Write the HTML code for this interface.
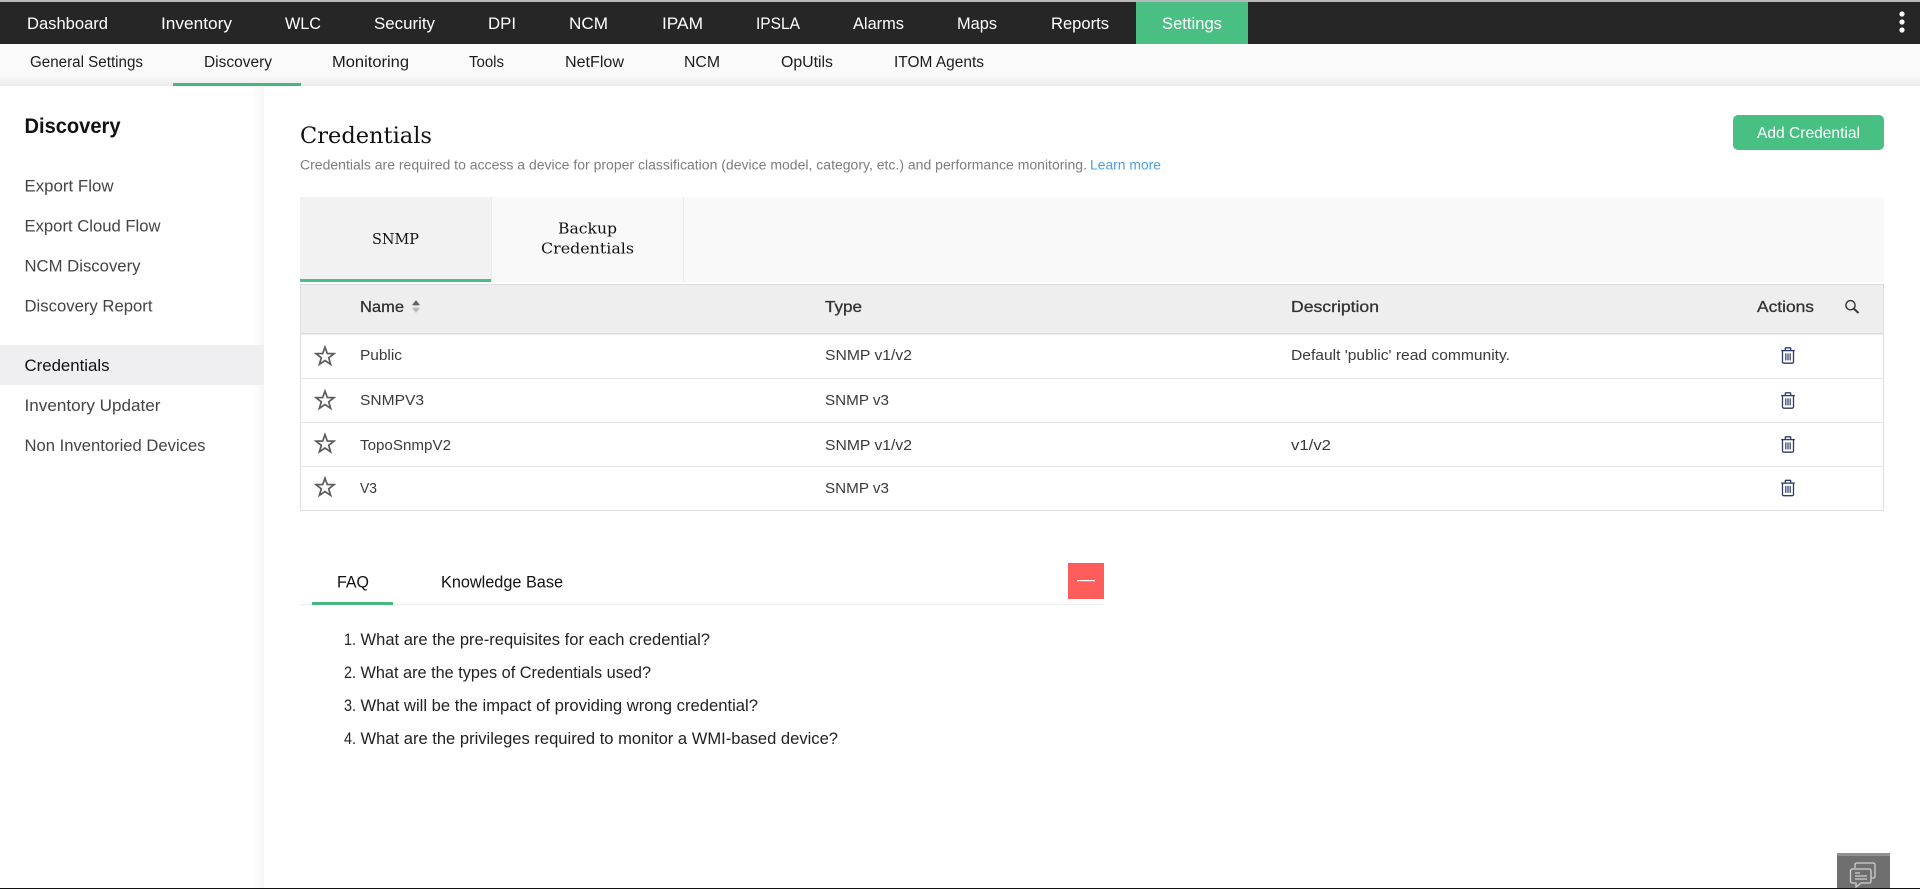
<!DOCTYPE html>
<html lang="en">
<head>
<meta charset="utf-8">
<title>Credentials</title>
<style>
html,body{margin:0;padding:0;background:#fff;width:1920px;height:889px;overflow:hidden}
svg{display:block}
text{font-family:"Liberation Sans",Arial,sans-serif;white-space:pre}
.n{font-size:17px;fill:#fff}
.s{font-size:15.5px;fill:#1c1c1c}
.l{font-size:16.5px;fill:#444}
.h{font-family:"DejaVu Serif","Liberation Serif",serif}
.th{font-size:16px;fill:#333;stroke:#333;stroke-width:.3px}
.td{font-size:15px;fill:#3a3a3a}
.q{font-size:16.5px;fill:#222}
</style>
</head>
<body>
<svg width="1920" height="889" viewBox="0 0 1920 889" xmlns="http://www.w3.org/2000/svg">
<defs>
<linearGradient id="sub" x1="0" y1="0" x2="0" y2="1"><stop offset="0" stop-color="#fafafa"/><stop offset=".75" stop-color="#fafafa"/><stop offset="1" stop-color="#ececec"/></linearGradient>
<linearGradient id="side" x1="0" y1="0" x2="1" y2="0"><stop offset="0" stop-color="#fff"/><stop offset="1" stop-color="#f6f6f6"/></linearGradient>
<g id="star"><path d="M10 1.6 12.3 8 19 8.2 13.7 12.3 15.6 18.8 10 15 4.4 18.8 6.3 12.3 1 8.2 7.7 8Z" fill="none" stroke="#5c5c5c" stroke-width="1.7" stroke-linejoin="miter"/></g>
<g id="trash" fill="none" stroke="#2c3a66" stroke-width="1.3"><path d="M.7 3.6H14.3"/><path d="M4.8 3.4V1.5Q4.8.8 5.5.8H9.5Q10.2.8 10.2 1.5V3.4"/><path d="M2 3.6V14.8Q2 16.2 3.4 16.2H11.6Q13 16.2 13 14.8V3.6"/><path d="M5.3 6.4V13.4M7.5 6.4V13.4M9.7 6.4V13.4" stroke-width="1.2"/></g>
</defs>

<!-- top strip and nav -->
<rect width="1920" height="2" fill="#b9b9b9"/>
<rect y="2" width="1920" height="42" fill="#262626"/>
<rect x="1136" y="2" width="112" height="42" fill="#4abf83"/>
<text class="n" x="27" y="29" textLength="81" lengthAdjust="spacingAndGlyphs">Dashboard</text>
<text class="n" x="161" y="29" textLength="71" lengthAdjust="spacingAndGlyphs">Inventory</text>
<text class="n" x="285" y="29" textLength="36" lengthAdjust="spacingAndGlyphs">WLC</text>
<text class="n" x="374" y="29" textLength="61" lengthAdjust="spacingAndGlyphs">Security</text>
<text class="n" x="488" y="29" textLength="28" lengthAdjust="spacingAndGlyphs">DPI</text>
<text class="n" x="569" y="29" textLength="39" lengthAdjust="spacingAndGlyphs">NCM</text>
<text class="n" x="662" y="29" textLength="41" lengthAdjust="spacingAndGlyphs">IPAM</text>
<text class="n" x="756" y="29" textLength="44" lengthAdjust="spacingAndGlyphs">IPSLA</text>
<text class="n" x="853" y="29" textLength="51" lengthAdjust="spacingAndGlyphs">Alarms</text>
<text class="n" x="957" y="29" textLength="40" lengthAdjust="spacingAndGlyphs">Maps</text>
<text class="n" x="1051" y="29" textLength="58" lengthAdjust="spacingAndGlyphs">Reports</text>
<text class="n" x="1162" y="29" textLength="60" lengthAdjust="spacingAndGlyphs">Settings</text>
<circle cx="1902" cy="14" r="2.6" fill="#fff"/><circle cx="1902" cy="22" r="2.6" fill="#fff"/><circle cx="1902" cy="30" r="2.6" fill="#fff"/>

<!-- sub nav -->
<rect y="44" width="1920" height="42" fill="url(#sub)"/>
<rect x="173" y="83" width="128" height="3" fill="#43b77c"/>
<text class="s" x="30" y="67" textLength="113" lengthAdjust="spacingAndGlyphs">General Settings</text>
<text class="s" x="204" y="67" textLength="68" lengthAdjust="spacingAndGlyphs">Discovery</text>
<text class="s" x="332" y="67" textLength="77" lengthAdjust="spacingAndGlyphs">Monitoring</text>
<text class="s" x="469" y="67" textLength="35" lengthAdjust="spacingAndGlyphs">Tools</text>
<text class="s" x="565" y="67" textLength="59" lengthAdjust="spacingAndGlyphs">NetFlow</text>
<text class="s" x="684" y="67" textLength="36" lengthAdjust="spacingAndGlyphs">NCM</text>
<text class="s" x="781" y="67" textLength="52" lengthAdjust="spacingAndGlyphs">OpUtils</text>
<text class="s" x="894" y="67" textLength="90" lengthAdjust="spacingAndGlyphs">ITOM Agents</text>

<!-- sidebar -->
<rect x="252" y="86" width="12" height="802" fill="url(#side)"/>
<rect x="0" y="345" width="264" height="40" fill="#efeff1"/>
<text x="24.5" y="133" font-size="21" font-weight="bold" fill="#111" textLength="96" lengthAdjust="spacingAndGlyphs">Discovery</text>
<text class="l" x="24.5" y="191.5" textLength="89" lengthAdjust="spacingAndGlyphs">Export Flow</text>
<text class="l" x="24.5" y="231.5" textLength="136" lengthAdjust="spacingAndGlyphs">Export Cloud Flow</text>
<text class="l" x="24.5" y="271.5" textLength="116" lengthAdjust="spacingAndGlyphs">NCM Discovery</text>
<text class="l" x="24.5" y="311.5" textLength="128" lengthAdjust="spacingAndGlyphs">Discovery Report</text>
<text class="l" x="24.5" y="371" textLength="85" lengthAdjust="spacingAndGlyphs" style="fill:#111">Credentials</text>
<text class="l" x="24.5" y="411" textLength="136" lengthAdjust="spacingAndGlyphs">Inventory Updater</text>
<text class="l" x="24.5" y="451" textLength="181" lengthAdjust="spacingAndGlyphs">Non Inventoried Devices</text>

<!-- heading -->
<text class="h" x="300" y="143" font-size="22" fill="#111" textLength="132" lengthAdjust="spacingAndGlyphs">Credentials</text>
<text x="300" y="169.5" font-size="13.5" fill="#7d7d7d" textLength="787" lengthAdjust="spacingAndGlyphs">Credentials are required to access a device for proper classification (device model, category, etc.) and performance monitoring.</text>
<text x="1090" y="169.5" font-size="13.5" fill="#4a9fe3" textLength="71" lengthAdjust="spacingAndGlyphs">Learn more</text>
<rect x="1733" y="115" width="151" height="35" rx="5" fill="#48bf83"/>
<text x="1757" y="138" font-size="16" fill="#fff" textLength="103" lengthAdjust="spacingAndGlyphs">Add Credential</text>

<!-- tabs -->
<rect x="300" y="197" width="1584" height="85" fill="#f9f9f9"/>
<rect x="300" y="197" width="191" height="85" fill="#f2f2f2"/>
<rect x="491" y="197" width="1" height="85" fill="#ececec"/>
<rect x="683" y="197" width="1" height="85" fill="#ececec"/>
<rect x="300" y="279" width="191" height="3" fill="#48bf83"/>
<text class="h" x="372" y="244" font-size="14.5" fill="#111" textLength="47" lengthAdjust="spacingAndGlyphs">SNMP</text>
<text class="h" x="558" y="233.5" font-size="14.5" fill="#111" textLength="59" lengthAdjust="spacingAndGlyphs">Backup</text>
<text class="h" x="541" y="253.5" font-size="14.5" fill="#111" textLength="93" lengthAdjust="spacingAndGlyphs">Credentials</text>

<!-- table -->
<rect x="300.5" y="284.5" width="1583" height="226" fill="#fff" stroke="#dedede"/>
<rect x="301" y="285" width="1582" height="48" fill="#eee"/>
<rect x="301" y="333" width="1582" height="1.5" fill="#dcdcdc"/>
<rect x="301" y="378" width="1582" height="1" fill="#e4e4e4"/>
<rect x="301" y="422" width="1582" height="1" fill="#e4e4e4"/>
<rect x="301" y="466" width="1582" height="1" fill="#e4e4e4"/>
<text class="th" x="360" y="312" textLength="44" lengthAdjust="spacingAndGlyphs">Name</text>
<path d="M413 304.8 416 301 419 304.8Z" fill="#666" stroke="#666" stroke-width="1.2" stroke-linejoin="round"/>
<path d="M413 308.2 416 312 419 308.2Z" fill="#bbb" stroke="#bbb" stroke-width="1.2" stroke-linejoin="round"/>
<text class="th" x="825" y="312" textLength="37" lengthAdjust="spacingAndGlyphs">Type</text>
<text class="th" x="1291" y="312" textLength="88" lengthAdjust="spacingAndGlyphs">Description</text>
<text class="th" x="1757" y="312" textLength="57" lengthAdjust="spacingAndGlyphs">Actions</text>
<g fill="none" stroke="#333" stroke-width="1.4"><circle cx="1850.5" cy="305.2" r="4.6"/><path d="M1854 308.8 1858.5 313" stroke-width="1.9"/></g>

<use href="#star" x="315" y="345.5"/>
<use href="#star" x="315" y="389.5"/>
<use href="#star" x="315" y="433"/>
<use href="#star" x="315" y="476.5"/>

<text class="td" x="360" y="360" textLength="42" lengthAdjust="spacingAndGlyphs">Public</text>
<text class="td" x="825" y="360" textLength="87" lengthAdjust="spacingAndGlyphs">SNMP v1/v2</text>
<text class="td" x="1291" y="360" textLength="219" lengthAdjust="spacingAndGlyphs">Default 'public' read community.</text>
<text class="td" x="360" y="405" textLength="64" lengthAdjust="spacingAndGlyphs">SNMPV3</text>
<text class="td" x="825" y="405" textLength="64" lengthAdjust="spacingAndGlyphs">SNMP v3</text>
<text class="td" x="360" y="450" textLength="91" lengthAdjust="spacingAndGlyphs">TopoSnmpV2</text>
<text class="td" x="825" y="450" textLength="87" lengthAdjust="spacingAndGlyphs">SNMP v1/v2</text>
<text class="td" x="1291" y="450" textLength="40" lengthAdjust="spacingAndGlyphs">v1/v2</text>
<text class="td" x="360" y="493" textLength="17" lengthAdjust="spacingAndGlyphs">V3</text>
<text class="td" x="825" y="493" textLength="64" lengthAdjust="spacingAndGlyphs">SNMP v3</text>

<use href="#trash" x="1780.5" y="347"/>
<use href="#trash" x="1780.5" y="392"/>
<use href="#trash" x="1780.5" y="436"/>
<use href="#trash" x="1780.5" y="479.5"/>

<!-- FAQ -->
<rect x="300" y="604" width="804" height="1" fill="#eee"/>
<rect x="312" y="602" width="81" height="3" fill="#43b77c"/>
<text class="q" x="337" y="587.5" textLength="32" lengthAdjust="spacingAndGlyphs" style="fill:#111">FAQ</text>
<text class="q" x="441" y="587.5" textLength="122" lengthAdjust="spacingAndGlyphs" style="fill:#111">Knowledge Base</text>
<rect x="1068" y="563" width="36" height="36" fill="#ff5c5c"/>
<rect x="1077" y="580" width="18" height="1.2" fill="#fff"/>
<text class="q" x="344" y="645" textLength="12" lengthAdjust="spacingAndGlyphs">1.</text>
<text class="q" x="360.5" y="645" textLength="349.5" lengthAdjust="spacingAndGlyphs">What are the pre-requisites for each credential?</text>
<text class="q" x="344" y="678" textLength="12" lengthAdjust="spacingAndGlyphs">2.</text>
<text class="q" x="360.5" y="678" textLength="290.5" lengthAdjust="spacingAndGlyphs">What are the types of Credentials used?</text>
<text class="q" x="344" y="711" textLength="12" lengthAdjust="spacingAndGlyphs">3.</text>
<text class="q" x="360.5" y="711" textLength="397.5" lengthAdjust="spacingAndGlyphs">What will be the impact of providing wrong credential?</text>
<text class="q" x="344" y="744" textLength="12" lengthAdjust="spacingAndGlyphs">4.</text>
<text class="q" x="360.5" y="744" textLength="477.5" lengthAdjust="spacingAndGlyphs">What are the privileges required to monitor a WMI-based device?</text>

<!-- chat widget -->
<rect x="1837" y="853" width="53" height="35" fill="#6f6f6f"/>
<rect x="1837" y="853" width="53" height="3" fill="#8f8f8f"/>
<g fill="none" stroke="#cfcfcf" stroke-width="1.3">
<path d="M1855 868V865Q1855 863 1857 863H1873Q1875 863 1875 865V876Q1875 878 1873 878H1871"/>
<path d="M1852.5 869H1869Q1871 869 1871 871V881Q1871 883 1869 883H1861L1856 887V883H1852.5Q1850.5 883 1850.5 881V871Q1850.5 869 1852.5 869Z" fill="#6f6f6f"/>
</g>
<path d="M1855 873H1860M1855 876H1867M1855 879H1867" stroke="#cfcfcf" stroke-width="1.3"/>
<rect y="888" width="1920" height="1" fill="#111"/>
</svg>
</body>
</html>
